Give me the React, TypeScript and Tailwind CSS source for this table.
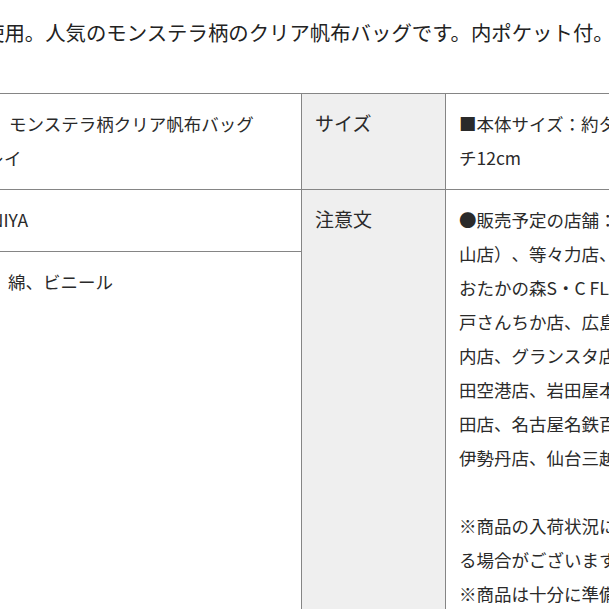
import React from "react";

const notes = [
  "●販売予定の店舗：ROOTOTE GALLERY（表参道青",
  "山店）、等々力店、二子玉川店、流山",
  "おたかの森S・C FLAGS店、神",
  "戸さんちか店、広島パセーラ店、丸の",
  "内店、グランスタ店、羽",
  "田空港店、岩田屋本館店、博多阪急店、梅",
  "田店、名古屋名鉄百貨店、新宿",
  "伊勢丹店、仙台三越店",
  "",
  "※商品の入荷状況により、お取り置きができかね",
  "る場合がございます。",
  "※商品は十分に準備しておりますが、",
  "売り切れの場合はご容赦ください。",
];

export default function App() {
  return (
    <div className="w-[609px] h-[609px] overflow-hidden bg-white font-['Noto_Sans_CJK_JP','Noto_Sans',sans-serif] [text-spacing-trim:space-all]">
      <p className="mt-[15px] ml-[-16px] whitespace-nowrap text-[20.4px] leading-[34px] text-[#222]">
        使用。人気のモンステラ柄のクリア帆布バッグです。内ポケット付。
      </p>
      <div className="mt-[44px] ml-[-44px] w-[1000px] border-t border-[#858585] text-[17.5px] leading-[34px] text-[#2a2a2a] whitespace-nowrap">
        <div className="flex">
          <div className="w-[346px] shrink-0 border-r border-b border-[#858585] pl-[13px] pt-[13px] pb-[14px]">
            <div className="pl-[40px]">モンステラ柄クリア帆布バッグ　</div>
            <div>グレイ</div>
          </div>
          <div className="w-[144px] shrink-0 border-r border-b border-[#858585] bg-[#efefef] pl-[13px] pt-[12px] text-[19px]">
            サイズ
          </div>
          <div className="flex-1 border-b border-[#858585] pl-[13px] pt-[13px] pb-[14px]">
            <div>■本体サイズ：約タテ30×ヨコ40×マ</div>
            <div>チ12cm</div>
          </div>
        </div>
        <div className="flex h-[520px]">
          <div className="w-[346px] shrink-0 border-r border-[#858585] flex flex-col">
            <div className="border-b border-[#858585] pl-[13px] pt-[13px] pb-[14px]">KANIYA</div>
            <div className="pl-[52px] pt-[13px] pb-[14px]">綿、ビニール</div>
          </div>
          <div className="w-[144px] shrink-0 border-r border-[#858585] bg-[#efefef] pl-[13px] pt-[12px] text-[19px]">
            注意文
          </div>
          <div className="flex-1 pl-[13px] pt-[13px]">
            {notes.map((n, i) => (
              <div key={i} className="h-[34px]">
                {n}
              </div>
            ))}
          </div>
        </div>
      </div>
    </div>
  );
}
